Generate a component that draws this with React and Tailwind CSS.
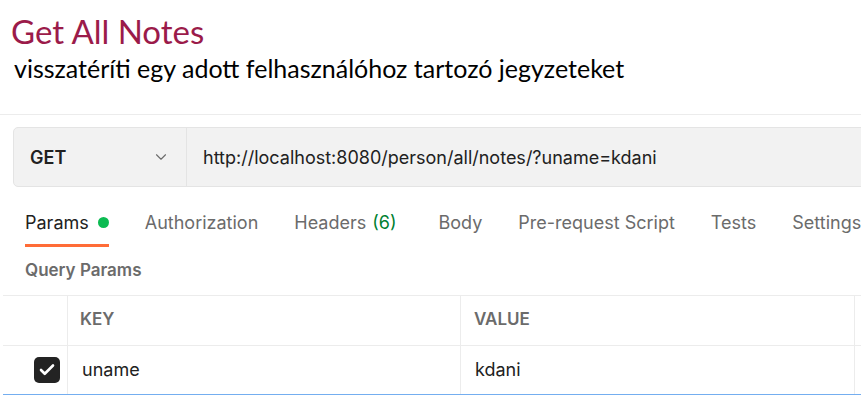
import { ChevronDown, Check } from 'lucide-react';

const tabs = [
  { label: 'Authorization' },
  { label: 'Headers', count: '(6)' },
  { label: 'Body' },
  { label: 'Pre-request Script' },
  { label: 'Tests' },
  { label: 'Settings' },
];

export default function App() {
  return (
    <div className="w-[861px] h-[400px] overflow-hidden bg-white">
      {/* Document heading */}
      <div className="pl-[11px] pt-[9px]">
        <h1 className="text-[33px] leading-[44px] text-[#9b1b4a] font-['Lato',sans-serif]">Get All Notes</h1>
        <p className="pl-[3px] text-[25px] leading-[30px] text-black font-['Lato',sans-serif]">
          visszatéríti egy adott felhasználóhoz tartozó jegyzeteket
        </p>
      </div>

      <div className="mt-[31px] border-t border-[#ececec]" />

      <div className="font-['Inter',sans-serif]">
        {/* Request bar */}
        <div className="ml-[13px] mt-[12px] flex h-[60px] w-[900px] rounded-l-[5px] border border-[#e4e4e4] bg-[#f2f2f2]">
          <div className="flex w-[173px] items-center justify-between border-r border-[#e4e4e4] pl-[16px] pr-[16px]">
            <span className="text-[18px] font-semibold text-[#212121]">GET</span>
            <ChevronDown size={18} strokeWidth={1.5} className="text-[#6b6b6b]" />
          </div>
          <div className="flex items-center whitespace-nowrap pl-[16px] text-[18px] text-[#212121]">
            http://localhost:8080/person/all/notes/?uname=kdani
          </div>
        </div>

        {/* Tabs */}
        <div className="mt-[22px] flex h-[38px] w-[900px] items-start gap-[36px] pl-[25px] text-[18px] text-[#6b6b6b]">
          <div className="flex h-full shrink-0 flex-col">
            <div className="flex items-center gap-[9px] text-[#212121]">
              Params
              <span className="h-[11px] w-[11px] rounded-full bg-[#0cbb52]" />
            </div>
            <div className="mt-auto h-[3px] bg-[#ff6c37]" />
          </div>
          {tabs.map((t) => (
            <div key={t.label} className={`shrink-0 whitespace-nowrap ${t.count ? 'pr-[6px]' : ''}`}>
              {t.label}
              {t.count && <span className="ml-[6px] text-[#007f31]">{t.count}</span>}
            </div>
          ))}
        </div>

        <div className="mt-[11px] pl-[25px] text-[17px] font-semibold text-[#6b6b6b]">Query Params</div>

        {/* Params table */}
        <div className="ml-[3px] mt-[11px] w-[900px] border-t border-[#ececec]">
          <div className="flex h-[50px] border-b border-[#ececec]">
            <div className="w-[65px] border-r border-[#ececec]" />
            <div className="flex w-[393px] items-center border-r border-[#ececec] pl-[12px] text-[17px] font-semibold text-[#6b6b6b]">
              KEY
            </div>
            <div className="flex w-[394px] items-center border-r border-[#ececec] pl-[13px] text-[17px] font-semibold text-[#6b6b6b]">
              VALUE
            </div>
          </div>
          <div className="flex h-[49px] border-b border-[#74aef0]">
            <div className="flex w-[65px] items-center justify-end border-r border-[#ececec] pr-[7px]">
              <span className="flex h-[26px] w-[26px] items-center justify-center rounded-[5px] bg-[#232323]">
                <Check size={18} strokeWidth={3.5} className="text-white" />
              </span>
            </div>
            <div className="flex w-[393px] items-center border-r border-[#ececec] pl-[14px] text-[18px] text-[#212121]">
              uname
            </div>
            <div className="flex w-[394px] items-center border-r border-[#ececec] pl-[14px] text-[18px] text-[#212121]">
              kdani
            </div>
          </div>
        </div>
      </div>
    </div>
  );
}
